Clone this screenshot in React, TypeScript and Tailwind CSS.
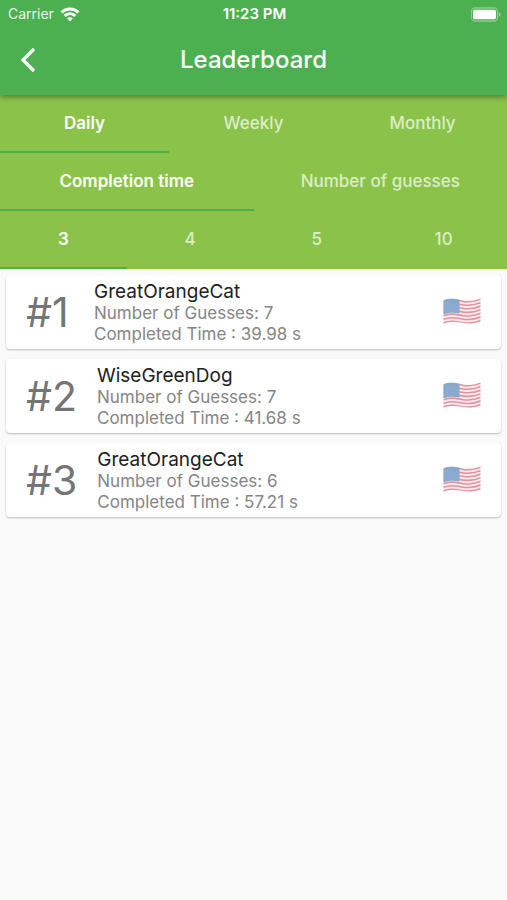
import { useState } from "react";
import clsx from "clsx";

const entries = [
  { rank: 1, name: "GreatOrangeCat", guesses: 7, time: "39.98" },
  { rank: 2, name: "WiseGreenDog", guesses: 7, time: "41.68" },
  { rank: 3, name: "GreatOrangeCat", guesses: 6, time: "57.21" },
];

const stripes = [0, 2, 4, 6, 8, 10, 12];

function WifiIcon() {
  return (
    <svg viewBox="0 0 20 15" className="w-5 h-[15px]" fill="none" stroke="white" strokeWidth="3" aria-hidden="true">
      <path d="M1.6 5.4C6.2 .8 13.8 .8 18.4 5.4" />
      <path d="M4.7 8.9C7.8 6 12.2 6 15.3 8.9" />
      <path d="M7.1 11.3C8.8 9.8 11.2 9.8 12.9 11.3L10 14.4Z" fill="white" stroke="none" />
    </svg>
  );
}

function BatteryIcon() {
  return (
    <svg viewBox="0 0 31 15" className="w-[31px] h-[15px]" aria-hidden="true">
      <rect x="1.5" y="1" width="26" height="13" rx="3.5" fill="none" stroke="white" strokeOpacity="0.35" strokeWidth="1.3" />
      <rect x="3" y="2.8" width="23" height="9.4" rx="1.8" fill="white" />
      <path d="M28.8 5.2Q30.6 6 30.6 7.5T28.8 9.8Z" fill="white" fillOpacity="0.45" />
    </svg>
  );
}

function UsFlag() {
  return (
    <svg viewBox="0 0 38 28" className="w-[38px] h-7" role="img" aria-label="United States">
      <clipPath id="flag-shape">
        <path d="M.5 2.5C7 -.2 12 1 19 2.2S31 3 37.5 .5V23.5C31 26.5 26 26 19 24.8S7 23.3 .5 26Z" />
      </clipPath>
      <g clipPath="url(#flag-shape)">
        <rect width="38" height="28" fill="#f8eaec" />
        {stripes.map((n) => (
          <path
            key={n}
            transform={`translate(0 ${n * 1.79})`}
            d="M0 3.5C7 .7 12 1.9 19 3.1S31 3.9 38 .9"
            fill="none"
            stroke="#e093a0"
            strokeWidth="1.6"
          />
        ))}
        <path d="M0 0H16.5V15.4C11 14.4 6 14.2 0 16.4Z" fill="#86a9cd" />
        <g stroke="#98b7d6" strokeWidth="0.8" strokeDasharray="1 1.7">
          <path d="M2 4.3H16M3.3 6.4H16M2 8.5H16M3.3 10.6H16M2 12.7H16" />
        </g>
      </g>
    </svg>
  );
}

function TabRow({ label, tabs }: { label: string; tabs: string[] }) {
  const [active, setActive] = useState(tabs[0]);

  return (
    <div role="tablist" aria-label={label} className="flex">
      {tabs.map((tab) => (
        <button
          key={tab}
          type="button"
          role="tab"
          aria-selected={tab === active}
          onClick={() => setActive(tab)}
          className={clsx(
            "flex-1 basis-0 h-[58px] pt-px border-b-2 text-[17px]",
            tab === active
              ? "border-[#4caf50] text-white font-semibold"
              : "border-transparent text-[#dcedc8] font-medium"
          )}
        >
          {tab}
        </button>
      ))}
    </div>
  );
}

export default function App() {
  return (
    <div className="min-h-screen bg-[#fafafa] font-['Inter',sans-serif]">
      <header className="relative z-10 bg-[#4caf50] text-white shadow-[0_2px_6px_rgba(0,0,0,0.4)]">
        <div className="grid grid-cols-3 items-center h-7 pl-2 pr-1.5">
          <div className="flex items-center gap-1.5">
            <span className="text-sm text-[#e8f5e9]">Carrier</span>
            <WifiIcon />
          </div>
          <span className="text-center text-[15px] font-semibold">11:23 PM</span>
          <div className="flex justify-end">
            <BatteryIcon />
          </div>
        </div>
        <div className="grid grid-cols-[56px_1fr_56px] items-center h-[67px] pb-1">
          <button type="button" aria-label="Back" className="flex items-center justify-center h-full">
            <svg viewBox="0 0 16 26" className="w-4 h-[26px]" fill="none" stroke="white" strokeWidth="3.2" aria-hidden="true">
              <path d="M14 2L3 13L14 24" />
            </svg>
          </button>
          <h1 className="text-center text-2xl font-medium">Leaderboard</h1>
        </div>
      </header>

      <nav className="bg-[#8bc34a]">
        <TabRow label="Period" tabs={["Daily", "Weekly", "Monthly"]} />
        <TabRow label="Ranking" tabs={["Completion time", "Number of guesses"]} />
        <TabRow label="Length" tabs={["3", "4", "5", "10"]} />
      </nav>

      <ol className="flex flex-col gap-2.5 px-1.5 py-1.5">
        {entries.map((entry) => (
          <li
            key={entry.rank}
            className="flex items-center h-[74px] px-5 bg-white rounded-sm shadow-[0_1px_2px_rgba(0,0,0,0.25)]"
          >
            <span className="min-w-12 text-[41px] leading-none text-[#757575]">#{entry.rank}</span>
            <div className="flex-1 ml-5">
              <h2 className="text-[19px] leading-[23px] text-[#212121]">{entry.name}</h2>
              <p className="text-[17px] leading-[21px] text-[#858585]">Number of Guesses: {entry.guesses}</p>
              <p className="text-[17px] leading-[21px] text-[#858585]">Completed Time : {entry.time} s</p>
            </div>
            <UsFlag />
          </li>
        ))}
      </ol>
    </div>
  );
}
